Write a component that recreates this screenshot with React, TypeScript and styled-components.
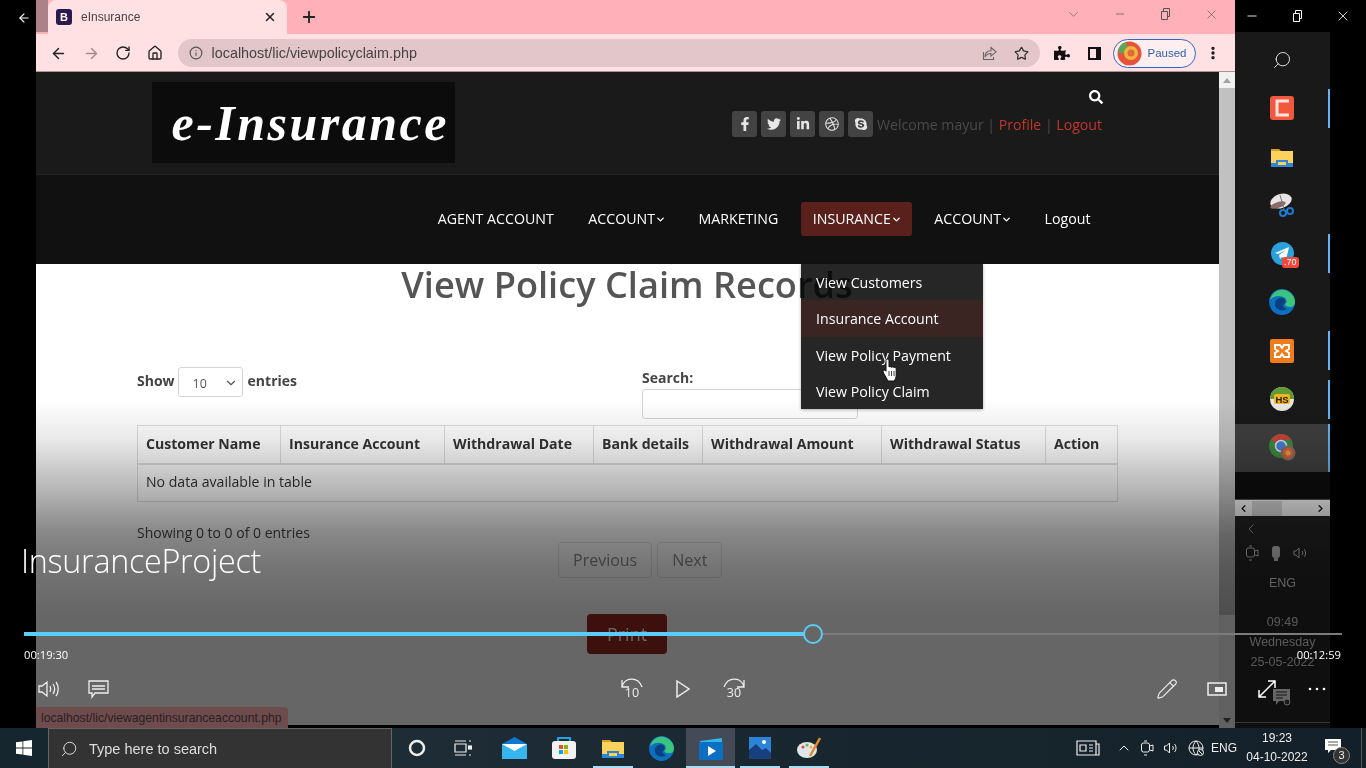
import React from 'react';
import styled, { createGlobalStyle } from 'styled-components';
import {
  FaFacebookF,
  FaTwitter,
  FaLinkedinIn,
  FaDribbble,
  FaSkype,
  FaSearch,
  FaPuzzlePiece,
} from 'react-icons/fa';
import {
  ArrowLeft,
  ArrowRight,
  RotateCw,
  Home,
  Info,
  Star,
  ChevronDown,
  ChevronLeft,
  ChevronRight,
  ChevronUp,
  X,
  Plus,
  Minus,
  EllipsisVertical,
  Search,
  Pencil,
} from 'lucide-react';

const Global = createGlobalStyle`
  html, body { margin: 0; padding: 0; background: #000; overflow: hidden; }
  body { font-family: "Open Sans", "Liberation Sans", sans-serif; }
  * { box-sizing: border-box; }
`;

const Screen = styled.div`
  width: 1366px;
  height: 768px;
  display: flex;
  flex-direction: column;
  overflow: hidden;
  background: #000;
`;

const Stage = styled.div`
  position: relative;
  height: 728px;
  display: flex;
  overflow: hidden;
`;

const Gutter = styled.div`
  width: 36px;
  background: #000;
  color: #fff;
  padding: 8px 0 0 17px;
`;

const Browser = styled.div`
  width: 1199px;
  display: flex;
  flex-direction: column;
`;

const TabStrip = styled.div`
  height: 34px;
  flex: none;
  background: #ffb0b8;
  display: flex;
  align-items: flex-end;
  color: #222;
`;

const PrevTab = styled.div`
  width: 12px;
  height: 32px;
  align-self: flex-start;
  background: #ab8287;
`;

const Tab = styled.div`
  width: 239px;
  height: 34px;
  background: #ffe0e3;
  border-radius: 8px 8px 0 0;
  display: flex;
  align-items: center;
  padding: 0 10px 0 8px;
  font-family: "Liberation Sans", sans-serif;
  font-size: 12px;
  color: #444;
`;

const Favicon = styled.div`
  width: 16px;
  height: 16px;
  border-radius: 3px;
  background: #2b1a4d;
  color: #fff;
  font: bold 11px/16px "Liberation Sans", sans-serif;
  text-align: center;
  margin-right: 9px;
`;

const TabTitle = styled.span`
  flex: 1;
`;

const NewTab = styled.div`
  display: flex;
  margin: 0 auto 8px 13px;
`;

const WindowButtons = styled.div`
  align-self: flex-start;
  height: 28px;
  display: flex;
  align-items: center;
  gap: 33px;
  padding-right: 16px;
  color: #555;
`;

const Toolbar = styled.div`
  height: 38px;
  flex: none;
  background: #ffe0e3;
  border-bottom: 1px solid #b08f92;
  display: flex;
  align-items: center;
  padding: 1px 14px 0;
  color: #222;
`;

const NavIcons = styled.div`
  display: flex;
  align-items: center;
  gap: 15.5px;
  margin-right: 15px;
`;

const Omnibox = styled.div`
  width: 862px;
  height: 28px;
  border-radius: 14px;
  background: #e2c6c9;
  display: flex;
  align-items: center;
  padding: 0 11px;
  font-family: "Liberation Sans", sans-serif;
  font-size: 14.4px;
  color: #444;
  gap: 9px;
`;

const Url = styled.span`
  flex: 1;
`;

const OmniActions = styled.div`
  display: flex;
  align-items: center;
  gap: 17px;
  color: #666;
`;

const ToolActions = styled.div`
  display: flex;
  align-items: center;
  margin-left: 14px;
  color: #111;
`;

const SidePanelIcon = styled.div`
  width: 13px;
  height: 13px;
  border: 2px solid #111;
  border-right-width: 5px;
  margin: 0 12px 0 18px;
`;

const Paused = styled.div`
  width: 83px;
  height: 29px;
  border: 1.5px solid #2f68c4;
  border-radius: 15px;
  background: #ffeef0;
  display: flex;
  align-items: center;
  gap: 6px;
  padding-left: 3px;
  margin-right: 9px;
  font: 11.5px "Liberation Sans", sans-serif;
  color: #2b5fb0;
`;

const Viewport = styled.div`
  position: relative;
  flex: 1;
  display: flex;
  min-height: 0;
`;

const Page = styled.div`
  position: relative;
  flex: 1;
  min-width: 0;
  background: #fff;
  display: flex;
  flex-direction: column;
`;

const ScrollBar = styled.div`
  width: 16px;
  flex: none;
  background: #f1f1f1;
  display: flex;
  flex-direction: column;
  align-items: center;
`;

const ScrollThumb = styled.div`
  width: 100%;
  height: 527px;
  background: #c1c1c1;
`;

const ScrollArrow = styled.div<{ $down?: boolean }>`
  width: 0;
  height: 0;
  margin: 6px 0 5px;
  border-left: 4px solid transparent;
  border-right: 4px solid transparent;
  ${(p) => (p.$down ? 'border-top: 5px solid #505050;' : 'border-bottom: 5px solid #a3a3a3;')}
  ${(p) => (p.$down ? 'margin-top: auto;' : '')}
`;

const TopBar = styled.div`
  height: 103px;
  flex: none;
  background: #1a1a1a;
  border-bottom: 1px solid #222;
  display: flex;
  padding: 10px 117px 0 116px;
`;

const LogoBox = styled.div`
  width: 303px;
  height: 81px;
  background: #0c0c0c;
  color: #fff;
  display: flex;
  align-items: center;
  justify-content: flex-end;
  padding: 0 6px 0 0;
  font: italic bold 50px "Liberation Serif", serif;
  letter-spacing: 2.5px;
  white-space: nowrap;
`;

const TopRight = styled.div`
  flex: 1;
  display: flex;
  flex-direction: column;
  align-items: flex-end;
  padding-top: 8px;
`;

const TopSearch = styled.div`
  display: flex;
  color: #fff;
  font-size: 14px;
  height: 20px;
  margin-right: -1px;
`;

const SocialRow = styled.div`
  display: flex;
  align-items: center;
  gap: 4px;
  margin-top: 1px;
  font-size: 14.1px;
  color: #4a4a4a;
`;

const SocialIcon = styled.span`
  width: 25px;
  height: 26px;
  border-radius: 3px;
  background: #434343;
  color: #e6e6e6;
  display: flex;
  align-items: center;
  justify-content: center;
  font-size: 14px;
`;

const WelcomeText = styled.span`
  white-space: pre;
`;

const RedLink = styled.span`
  color: #c3362b;
`;

const NavBar = styled.div`
  height: 89px;
  flex: none;
  background: #111;
  display: flex;
  align-items: flex-start;
  justify-content: flex-end;
  padding: 27px 116.5px 0 0;
`;

const NavItem = styled.div<{ $active?: boolean }>`
  height: 34px;
  padding: 0 12px;
  margin-left: 10.5px;
  border-radius: 3px;
  background: ${(p) => (p.$active ? '#5a211c' : 'transparent')};
  color: #fff;
  font-size: 14.2px;
  line-height: 34px;
  display: flex;
  align-items: center;
  white-space: nowrap;
`;

const Caret = styled(ChevronDown)`
  margin-right: -2px;
`;

const Dropdown = styled.div`
  position: absolute;
  left: 765px;
  top: 192px;
  width: 182px;
  height: 145px;
  background: #262626;
  display: flex;
  flex-direction: column;
  box-shadow: 0 1px 3px rgba(0, 0, 0, 0.3);
`;

const DropItem = styled.div<{ $hover?: boolean }>`
  position: relative;
  z-index: 4;
  height: 36.4px;
  padding-left: 15px;
  line-height: 37px;
  color: #fff;
  font-size: 14.2px;
  background: ${(p) => (p.$hover ? '#3a2523' : 'transparent')};
`;

const Content = styled.div`
  flex: 1;
  padding: 0 102px 0 101px;
  display: flex;
  flex-direction: column;
  color: #333;
`;

/* the title shows through the open menu as darker letters */
const Heading = styled.h1`
  position: relative;
  z-index: 3;
  margin: -1px 0 0;
  height: 104px;
  text-align: center;
  font-size: 36.2px;
  font-weight: 600;
  line-height: 42px;
  color: #555;
  white-space: nowrap;
  mix-blend-mode: multiply;
`;

const Controls = styled.div`
  height: 58px;
  display: flex;
  justify-content: space-between;
  padding-right: 258px;
  font-size: 14px;
  font-weight: 700;
  color: #444;
`;

const Length = styled.div`
  display: flex;
  align-items: flex-start;
  gap: 4px;
  line-height: 27px;
`;

const SelectBox = styled.div`
  width: 65px;
  height: 30px;
  margin: 0 1px 0 -1px;
  border: 1px solid #d5d5d5;
  border-radius: 3px;
  display: flex;
  align-items: center;
  justify-content: space-between;
  padding: 2px 4px 0 14px;
  font-size: 12.5px;
  font-weight: 400;
  color: #555;
`;

const SearchField = styled.label`
  display: flex;
  flex-direction: column;
  width: 216px;
  margin-right: 1px;
  line-height: 22px;
`;

const SearchBox = styled.div`
  height: 30px;
  border: 1px solid #d5d5d5;
  border-radius: 3px;
  background: #fff;
`;

const Table = styled.table`
  width: 980px;
  flex: none;
  border-collapse: collapse;
  table-layout: fixed;
  font-size: 14.1px;
  color: #333;
`;

const Th = styled.th`
  height: 38px;
  padding: 0 8px 2px;
  text-align: left;
  font-weight: 700;
  white-space: nowrap;
  border: 1px solid #dedede;
  border-bottom-width: 2px;
  color: #333;
`;

const Td = styled.td`
  height: 38px;
  padding: 0 8px 2px;
  border: 1px solid #dedede;
  color: #333;
`;

const Showing = styled.div`
  margin-top: 21px;
  height: 20px;
  font-size: 14px;
  line-height: 20px;
  color: #444;
`;

const Pager = styled.div`
  display: flex;
  gap: 5px;
  margin-top: -1px;
  padding-left: 421px;
`;

const PageButton = styled.div`
  height: 36px;
  padding: 0 14px;
  border: 1px solid #e2e2e2;
  border-radius: 4px;
  font-size: 16px;
  line-height: 34px;
  color: #888;
`;

const PrintRow = styled.div`
  display: flex;
  margin-top: 36px;
  padding-left: 450px;
`;

const PrintButton = styled.div`
  width: 80px;
  height: 40px;
  border-radius: 4px;
  background: #94211a;
  color: #fff;
  opacity: 0.96;
  text-align: center;
  font-size: 18px;
  line-height: 40px;
`;

const PageEdge = styled.div`
  height: 3px;
  flex: none;
  background: #000;
`;

const SidePane = styled.div`
  position: relative;
  width: 131px;
  display: flex;
  flex-direction: column;
  background: #000;
`;

const SideTitle = styled.div`
  height: 32px;
  flex: none;
  display: flex;
  align-items: center;
  justify-content: flex-end;
  gap: 32px;
  padding-right: 15px;
  color: #fff;
`;

const Dock = styled.div`
  width: 95px;
  flex: 1;
  background: #191919;
  display: flex;
  flex-direction: column;
`;

const DockSearch = styled.div`
  height: 52px;
  flex: none;
  display: flex;
  align-items: center;
  justify-content: center;
  padding-top: 4px;
  color: #ddd;
  transform: scaleX(-1);
`;

const DockItem = styled.div<{ $running?: boolean; $active?: boolean }>`
  height: 48.5px;
  flex: none;
  display: flex;
  align-items: center;
  justify-content: center;
  padding-right: 1px;
  background-color: ${(p) => (p.$active ? '#3f3f3f' : 'transparent')};
  background-image: ${(p) => (p.$running ? 'linear-gradient(#62b5f5, #62b5f5)' : 'none')};
  background-repeat: no-repeat;
  background-position: right center;
  background-size: 2px ${(p) => (p.$active ? '100%' : '39px')};
`;

const DockGap = styled.div`
  height: 28px;
  flex: none;
  background: #0e0e0e;
  border-bottom: 1px solid #555;
`;

const DockScroll = styled.div`
  height: 16px;
  flex: none;
  background: #fff;
  display: flex;
  align-items: center;
  padding: 0 4px 0 3px;
  color: #222;
`;

const DockThumb = styled.div`
  width: 30px;
  height: 15px;
  background: #dcdcdc;
  margin: 0 auto 0 3px;
`;

const Tray = styled.div`
  position: relative;
  flex: 1;
  background: #252525;
  display: flex;
  flex-direction: column;
  align-items: center;
  color: #ddd;
  font: 12.5px "Liberation Sans", sans-serif;
  padding-top: 5px;
`;

const TrayBack = styled.div`
  align-self: flex-start;
  padding-left: 8px;
  display: flex;
`;

const TrayIcons = styled.div`
  display: flex;
  gap: 12px;
  align-items: center;
  margin: 8px 12px 0 0;
`;

const TrayLine = styled.div<{ $gap: number }>`
  margin-top: ${(p) => p.$gap}px;
  line-height: 15px;
`;

const TrayFoot = styled.div`
  margin-top: auto;
  margin-bottom: 5px;
  align-self: stretch;
  height: 1px;
  background: #888;
`;

const FeedbackIcon = styled.svg`
  position: absolute;
  left: 38px;
  top: 173px;
`;

/* video player controls, drawn over the recording */
const Shade = styled.div`
  position: absolute;
  left: 0;
  right: 0;
  top: 400px;
  bottom: 0;
  z-index: 5;
  background: linear-gradient(
    to bottom,
    rgba(0, 0, 0, 0) 0,
    rgba(0, 0, 0, 0.09) 40px,
    rgba(0, 0, 0, 0.33) 100px,
    rgba(0, 0, 0, 0.47) 133px,
    rgba(0, 0, 0, 0.55) 170px,
    rgba(0, 0, 0, 0.6) 215px
  );
  pointer-events: none;
`;

const StatusBubble = styled.div`
  position: absolute;
  left: 36px;
  bottom: 0;
  z-index: 6;
  width: 252px;
  height: 21px;
  padding-left: 5px;
  background: #6e4c4e;
  border-radius: 0 4px 0 0;
  font: 12.2px/22px "Liberation Sans", sans-serif;
  color: #2a2020;
`;

const Title = styled.div`
  position: absolute;
  left: 21px;
  top: 538px;
  z-index: 6;
  font-size: 32.3px;
  font-weight: 300;
  line-height: 44px;
  color: #fff;
  letter-spacing: -0.3px;
`;

const SeekTrack = styled.div`
  position: absolute;
  left: 24px;
  right: 24px;
  top: 633px;
  height: 2px;
  z-index: 6;
  background: #7c7c7c;
`;

const SeekFill = styled.div`
  height: 4px;
  margin-top: -1px;
  background: #5accf8;
`;

const SeekThumb = styled.div`
  position: absolute;
  top: -9px;
  width: 20px;
  height: 20px;
  margin-left: -10px;
  border-radius: 50%;
  border: 2px solid #5accf8;
  background: #666;
`;

const TimeText = styled.div<{ $right?: boolean }>`
  position: absolute;
  top: 647px;
  z-index: 6;
  ${(p) => (p.$right ? 'right: 25px;' : 'left: 24px;')}
  font: 11.2px/15px "Open Sans", sans-serif;
  color: #fff;
`;

const PlayerRow = styled.div`
  position: absolute;
  left: 0;
  right: 0;
  top: 675px;
  height: 28px;
  z-index: 6;
  display: flex;
  align-items: center;
  color: #eee;
`;

const PlayerSide = styled.div`
  width: 450px;
  display: flex;
  align-items: center;
  gap: 28px;
  padding-left: 38px;
`;

const PlayerCenter = styled.div`
  display: flex;
  align-items: center;
  gap: 33px;
  margin-left: 171px;
`;

const PlayerEnd = styled.div`
  display: flex;
  align-items: center;
  margin-left: auto;
  padding-right: 40px;
`;

const Skip = styled.div`
  position: relative;
  width: 22px;
  height: 24px;
  display: flex;
  justify-content: center;
`;

const SkipLabel = styled.span`
  position: absolute;
  top: 8px;
  left: 0;
  right: 0;
  text-align: center;
  font: 12.5px/16px "Open Sans", sans-serif;
  color: #eee;
`;

const Taskbar = styled.div`
  height: 40px;
  display: flex;
  align-items: center;
  background: linear-gradient(90deg, #16262f 0%, #1e2c36 30%, #18272f 60%, #142029 100%);
  color: #eee;
`;

const StartButton = styled.div`
  width: 48px;
  display: flex;
  justify-content: center;
`;

const SearchPill = styled.div`
  width: 344px;
  height: 40px;
  background: #333;
  border: 1px solid #666;
  border-bottom: none;
  display: flex;
  align-items: center;
  gap: 11px;
  padding-left: 11px;
  font: 14.5px "Liberation Sans", "Open Sans", sans-serif;
  color: #ddd;
`;

const TaskApps = styled.div`
  display: flex;
  align-items: center;
  height: 40px;
`;

const TaskApp = styled.div<{ $open?: boolean; $active?: boolean }>`
  width: 49px;
  height: 40px;
  display: flex;
  align-items: center;
  justify-content: center;
  background-color: ${(p) => (p.$active ? '#454a57' : 'transparent')};
  background-image: ${(p) => (p.$open ? 'linear-gradient(#a8dcee, #a8dcee)' : 'none')};
  background-repeat: no-repeat;
  background-position: center bottom;
  background-size: ${(p) => (p.$active ? '100%' : '40px')} 2px;
`;

const TaskViewIcon = styled.svg`
  margin-right: 5px;
`;

const SystemTray = styled.div`
  margin-left: auto;
  display: flex;
  align-items: center;
  height: 40px;
  font: 12px "Liberation Sans", sans-serif;
  color: #eee;
`;

const TrayGlyphs = styled.div`
  display: flex;
  align-items: center;
  gap: 9px;
  margin-right: 7px;
`;

const Clock = styled.div`
  width: 72px;
  margin-left: 4px;
  text-align: center;
  line-height: 19px;
  font-size: 12px;
`;

const Notify = styled.div`
  position: relative;
  width: 40px;
  height: 40px;
  display: flex;
  align-items: center;
  justify-content: center;
  padding-bottom: 4px;
  margin-right: 8px;
`;

const NotifyBadge = styled.span`
  position: absolute;
  right: 3px;
  bottom: 4px;
  width: 17px;
  height: 17px;
  border-radius: 50%;
  background: #333;
  border: 1px solid #888;
  font: 11px/15px "Liberation Sans", sans-serif;
  text-align: center;
  color: #eee;
`;

const ShowDesktop = styled.div`
  width: 5px;
  height: 40px;
  border-left: 1px solid #555;
`;

const Cursor = styled.svg`
  position: absolute;
  left: 846px;
  top: 286px;
  z-index: 4;
`;

const TelegramWrap = styled.div`
  position: relative;
  display: flex;
`;

const TelegramBadge = styled.span`
  position: absolute;
  right: -5px;
  bottom: -3px;
  padding: 0 2px;
  border-radius: 3px;
  background: #f04a3c;
  font: 9px/11px "Liberation Sans", sans-serif;
  color: #fff;
`;

const Folder = () => (
  <svg width="22" height="20" viewBox="0 0 22 20">
    <path d="M0 2h8l2 2H0z" fill="#d8a022" />
    <path d="M0 4h22v16H0z" fill="#fbd25c" />
    <path d="M0 16h5v-3h12v3h5v4H0z" fill="#2f86d6" />
    <path d="M7 15h8v3H7z" fill="#fbd25c" />
  </svg>
);

const Edge = ({ size = 26 }: { size?: number }) => (
  <svg width={size} height={size} viewBox="0 0 26 26">
    <circle cx="13" cy="13" r="13" fill="#0c6fc0" />
    <path d="M1 11C3 3 10 0 15 1c6 1 11 6 11 12 0 3-2 5-5 5-3 0-5-1-5-3 2-1 2-4 0-6-4-3-11-3-15 2z" fill="#3bc47e" />
    <path d="M6 15c0-4 4-7 8-6 3 1 3 5 1 6-2 1-1 4 3 5-4 3-12 1-12-5z" fill="#0a3f80" />
  </svg>
);

const ChromeBadged = () => (
  <svg width="27" height="27" viewBox="0 0 27 27">
    <circle cx="12" cy="12" r="12" fill="#3b8a3f" />
    <path d="M12 0a12 12 0 0 1 10.400 6H12a6 6 0 0 0-5.400 3.500L2.600 5.500A12 12 0 0 1 12 0z" fill="#c9443a" />
    <circle cx="12" cy="12" r="5.500" fill="#3f7fe0" stroke="#ddd" strokeWidth="1.500" />
    <circle cx="19" cy="19" r="7.500" fill="#8a6a5a" />
    <circle cx="19" cy="19" r="5" fill="#d9603c" />
    <circle cx="19" cy="19" r="2.500" fill="#e0a03c" />
  </svg>
);

const PausedAvatar = () => (
  <svg width="25" height="25" viewBox="0 0 25 25">
    <circle cx="12.500" cy="12.500" r="12" fill="#e5533d" />
    <path d="M1 12a12 12 0 0 1 8-11l3 11z" fill="#5aa75a" />
    <circle cx="14" cy="12" r="7" fill="#f2b53c" />
    <circle cx="14" cy="12" r="3.500" fill="#e2663e" />
  </svg>
);

const columns = [
  { label: 'Customer Name', width: 143 },
  { label: 'Insurance Account', width: 164 },
  { label: 'Withdrawal Date', width: 149 },
  { label: 'Bank details', width: 109 },
  { label: 'Withdrawal Amount', width: 179 },
  { label: 'Withdrawal Status', width: 164 },
  { label: 'Action', width: 72 },
];

const socials = [FaFacebookF, FaTwitter, FaLinkedinIn, FaDribbble, FaSkype];

const navItems = [
  { label: 'AGENT ACCOUNT' },
  { label: 'ACCOUNT', caret: true },
  { label: 'MARKETING' },
  { label: 'INSURANCE', caret: true, active: true },
  { label: 'ACCOUNT', caret: true },
  { label: 'Logout' },
];

const menuItems = ['View Customers', 'Insurance Account', 'View Policy Payment', 'View Policy Claim'];

const App = () => {
  return (
    <Screen>
      <Global />
      <Stage>
        <Gutter>
          <ArrowLeft size={14} />
        </Gutter>
        <Browser>
          <TabStrip>
            <PrevTab />
            <Tab>
              <Favicon>B</Favicon>
              <TabTitle>eInsurance</TabTitle>
              <X size={14} strokeWidth={2.5} color="#222" />
            </Tab>
            <NewTab>
              <Plus size={18} strokeWidth={2.5} />
            </NewTab>
            <WindowButtons>
              <ChevronDown size={15} strokeWidth={1} />
              <Minus size={12} strokeWidth={1.5} />
              <svg width="12" height="12" viewBox="0 0 12 12" fill="none" stroke="#555">
                <path d="M2.500 3.500h6v8h-6zM4.500 3.500v-3h6v8h-2" />
              </svg>
              <X size={15} strokeWidth={1} />
            </WindowButtons>
          </TabStrip>
          <Toolbar>
            <NavIcons>
              <ArrowLeft size={17} />
              <ArrowRight size={17} color="#a88" />
              <RotateCw size={16} />
              <Home size={16} />
            </NavIcons>
            <Omnibox>
              <Info size={14} color="#555" />
              <Url>localhost/lic/viewpolicyclaim.php</Url>
              <OmniActions>
                <svg width="15" height="15" viewBox="0 0 15 15" fill="none" stroke="#666" strokeWidth="1.100">
                  <path d="M1.500 6v7.500h10V11M9 1.500l5 4.300-5 4.300V7.500C6 7.500 4 9 3 11c0-4 2.200-6.300 6-6.300z" />
                </svg>
                <Star size={15} color="#333" />
              </OmniActions>
            </Omnibox>
            <ToolActions>
              <FaPuzzlePiece size={16} />
              <SidePanelIcon />
              <Paused>
                <PausedAvatar />
                Paused
              </Paused>
              <EllipsisVertical size={16} strokeWidth={3} />
            </ToolActions>
          </Toolbar>
          <Viewport>
            <Page>
              <TopBar>
                <LogoBox>e-Insurance</LogoBox>
                <TopRight>
                  <TopSearch>
                    <FaSearch />
                  </TopSearch>
                  <SocialRow>
                    {socials.map((Icon, i) => (
                      <SocialIcon key={i}>
                        <Icon />
                      </SocialIcon>
                    ))}
                    <WelcomeText>
                      Welcome mayur | <RedLink>Profile</RedLink> | <RedLink>Logout</RedLink>
                    </WelcomeText>
                  </SocialRow>
                </TopRight>
              </TopBar>
              <NavBar>
                {navItems.map((item, i) => (
                  <NavItem key={i} $active={item.active}>
                    {item.label}
                    {item.caret && <Caret size={11} strokeWidth={3} />}
                  </NavItem>
                ))}
              </NavBar>
              <Dropdown>
                {menuItems.map((item, i) => (
                  <DropItem key={item} $hover={i === 1}>
                    {item}
                  </DropItem>
                ))}
              </Dropdown>
              <Cursor width="16" height="24" viewBox="0 0 16 24">
                <path
                  d="M5 1c1 0 2 .8 2 2v6c.5-.5 2-.5 2.500.2.600-.5 2-.4 2.500.4.700-.4 2-.2 2.200 1V17c0 3-1 4-2 6H6L1.500 15c-.8-1.500-.3-2.500.6-2.800.8-.2 1.400.3 1.900 1V3c0-1.200.4-2 1-2z"
                  fill="#fff"
                  stroke="#111"
                  strokeWidth="1"
                />
                <path d="M7 13v5M9.500 13v5M12 13v5" stroke="#111" strokeWidth="0.800" />
              </Cursor>
              <Content>
                <Heading>View Policy Claim Records</Heading>
                <Controls>
                  <Length>
                    Show
                    <SelectBox>
                      10
                      <ChevronDown size={14} />
                    </SelectBox>
                    entries
                  </Length>
                  <SearchField>
                    Search:
                    <SearchBox />
                  </SearchField>
                </Controls>
                <Table>
                  <colgroup>
                    {columns.map((c) => (
                      <col key={c.label} width={c.width} />
                    ))}
                  </colgroup>
                  <thead>
                    <tr>
                      {columns.map((c) => (
                        <Th key={c.label}>{c.label}</Th>
                      ))}
                    </tr>
                  </thead>
                  <tbody>
                    <tr>
                      <Td colSpan={7}>No data available in table</Td>
                    </tr>
                  </tbody>
                </Table>
                <Showing>Showing 0 to 0 of 0 entries</Showing>
                <Pager>
                  <PageButton>Previous</PageButton>
                  <PageButton>Next</PageButton>
                </Pager>
                <PrintRow>
                  <PrintButton>Print</PrintButton>
                </PrintRow>
              </Content>
              <PageEdge />
            </Page>
            <ScrollBar>
              <ScrollArrow />
              <ScrollThumb />
              <ScrollArrow $down />
            </ScrollBar>
          </Viewport>
        </Browser>
        <SidePane>
          <SideTitle>
            <Minus size={14} strokeWidth={1.5} />
            <svg width="12" height="12" viewBox="0 0 12 12" fill="none" stroke="#fff">
              <path d="M2.500 3.500h6v8h-6zM4.500 3.500v-3h6v8h-2" />
            </svg>
            <X size={16} strokeWidth={1.2} />
          </SideTitle>
          <Dock>
            <DockSearch>
              <Search size={20} strokeWidth={1.2} />
            </DockSearch>
            <DockItem $running>
              <svg width="24" height="24" viewBox="0 0 24 24">
                <rect width="24" height="24" rx="3" fill="#f2583e" />
                <path d="M19 5H7v14h12" fill="none" stroke="#ffe3dc" strokeWidth="3" />
              </svg>
            </DockItem>
            <DockItem>
              <Folder />
            </DockItem>
            <DockItem>
              <svg width="24" height="24" viewBox="0 0 24 24">
                <ellipse cx="11" cy="8" rx="11" ry="7" fill="#e9e5e5" transform="rotate(-18 11 8)" />
                <ellipse cx="8" cy="12" rx="8" ry="3" fill="#8d6a6a" transform="rotate(-18 8 12)" />
                <path d="M10 2l4 14" stroke="#777" />
                <circle cx="13" cy="20" r="3" fill="none" stroke="#1f7ad0" strokeWidth="2" />
                <circle cx="20" cy="18" r="3" fill="none" stroke="#1f7ad0" strokeWidth="2" />
              </svg>
            </DockItem>
            <DockItem $running>
              <TelegramWrap>
                <svg width="23" height="23" viewBox="0 0 23 23">
                  <circle cx="11.500" cy="11.500" r="11.500" fill="#2ba0dc" />
                  <path d="M4 11l14-6-3 13-4-3-2 2-1-4 7-5-8 4z" fill="#fff" />
                </svg>
                <TelegramBadge>.70</TelegramBadge>
              </TelegramWrap>
            </DockItem>
            <DockItem>
              <Edge />
            </DockItem>
            <DockItem $running>
              <svg width="24" height="24" viewBox="0 0 24 24">
                <rect width="24" height="24" rx="2" fill="#f07c1c" />
                <path d="M5 6h5l2 3 2-3h5v4l-3 2 3 2v4h-5l-2-3-2 3H5v-4l3-2-3-2z" fill="none" stroke="#fff" strokeWidth="2" />
              </svg>
            </DockItem>
            <DockItem $running>
              <svg width="24" height="24" viewBox="0 0 24 24">
                <circle cx="12" cy="12" r="12" fill="#e8e8e0" />
                <path d="M0 12a12 12 0 0 1 24 0z" fill="#5f9a35" />
                <rect x="4" y="7" width="16" height="10" rx="2" fill="#f4b21f" />
                <text x="12" y="15.500" textAnchor="middle" fontFamily="Liberation Sans, sans-serif" fontWeight="700" fontSize="9.500" fill="#222">
                  HS
                </text>
              </svg>
            </DockItem>
            <DockItem $running $active>
              <ChromeBadged />
            </DockItem>
            <DockGap />
            <DockScroll>
              <ChevronLeft size={11} strokeWidth={3} />
              <DockThumb />
              <ChevronRight size={11} strokeWidth={3} />
            </DockScroll>
            <Tray>
              <TrayBack>
                <ChevronLeft size={16} strokeWidth={1} />
              </TrayBack>
              <TrayIcons>
                <svg width="13" height="16" viewBox="0 0 13 16" fill="none" stroke="#ccc">
                  <rect x="0.500" y="3" width="8" height="9" rx="2" />
                  <path d="M9 6l3-1v6l-3-1M3 1h3M3 15h3" />
                </svg>
                <svg width="10" height="15" viewBox="0 0 10 15" fill="#ccc">
                  <rect x="1" width="8" height="12" rx="3" />
                  <rect x="3" y="12" width="4" height="3" />
                </svg>
                <svg width="15" height="14" viewBox="0 0 15 14" fill="none" stroke="#ccc">
                  <path d="M1 5h2l3-3v10L3 9H1zM9 5c1 1 1 3 0 4M11 3c2 2 2 6 0 8" />
                </svg>
              </TrayIcons>
              <TrayLine $gap={15}>ENG</TrayLine>
              <TrayLine $gap={24}>09:49</TrayLine>
              <TrayLine $gap={5}>Wednesday</TrayLine>
              <TrayLine $gap={5}>25-05-2022</TrayLine>
              <FeedbackIcon width="18" height="17" viewBox="0 0 18 17">
                <path d="M0 0h17v12H6l-3 4v-4H0z" fill="#fff" />
                <path d="M3 3h11M3 6h11M3 9h7" stroke="#333" />
                <circle cx="14" cy="13" r="3" fill="#444" stroke="#fff" />
              </FeedbackIcon>
              <TrayFoot />
            </Tray>
          </Dock>
        </SidePane>
        <Shade />
        <StatusBubble>localhost/lic/viewagentinsuranceaccount.php</StatusBubble>
        <Title>InsuranceProject</Title>
        <SeekTrack>
          <SeekFill style={{ width: 789 }} />
          <SeekThumb style={{ left: 789 }} />
        </SeekTrack>
        <TimeText>00:19:30</TimeText>
        <TimeText $right>00:12:59</TimeText>
        <PlayerRow>
          <PlayerSide>
            <svg width="22" height="18" viewBox="0 0 22 18" fill="none" stroke="#eee" strokeWidth="1.300">
              <path d="M1 6h3l5-4v14l-5-4H1zM12 6c1 2 1 4 0 6M15 4c2 3 2 7 0 10M18 2c3 4 3 10 0 14" />
            </svg>
            <svg width="21" height="19" viewBox="0 0 21 19" fill="none" stroke="#eee" strokeWidth="1.300">
              <path d="M1 1h19v12H7l-3 4v-4H1zM4 6h13M4 9h13" />
            </svg>
          </PlayerSide>
          <PlayerCenter>
            <Skip>
              <svg width="22" height="12" viewBox="0 0 22 12" fill="none" stroke="#eee" strokeWidth="1.300">
                <path d="M1 10c2-10 16-11 20 0M1 3v7h7" />
              </svg>
              <SkipLabel>10</SkipLabel>
            </Skip>
            <svg width="14" height="18" viewBox="0 0 14 18" fill="none" stroke="#eee" strokeWidth="1.500">
              <path d="M1 1l12 8-12 8z" />
            </svg>
            <Skip>
              <svg width="22" height="12" viewBox="0 0 22 12" fill="none" stroke="#eee" strokeWidth="1.300">
                <path d="M1 10c4-11 18-10 20 0M21 3v7h-7" />
              </svg>
              <SkipLabel>30</SkipLabel>
            </Skip>
          </PlayerCenter>
          <PlayerEnd>
            <Pencil size={22} strokeWidth={1.2} />
            <svg width="20" height="14" viewBox="0 0 20 14" fill="none" stroke="#eee" strokeWidth="1.500" style={{ marginLeft: 29 }}>
              <rect x="1" y="1" width="18" height="12" />
              <rect x="8" y="5" width="8" height="5" fill="#eee" stroke="none" />
            </svg>
            <svg width="20" height="20" viewBox="0 0 20 20" fill="none" stroke="#fff" strokeWidth="1.500" style={{ marginLeft: 30 }}>
              <path d="M2 18L18 2M11 2h7v7M2 11v7h7" />
            </svg>
            <svg width="18" height="4" viewBox="0 0 18 4" fill="#fff" style={{ marginLeft: 31 }}>
              <circle cx="2" cy="2" r="1.300" />
              <circle cx="9" cy="2" r="1.300" />
              <circle cx="16" cy="2" r="1.300" />
            </svg>
          </PlayerEnd>
        </PlayerRow>
      </Stage>
      <Taskbar>
        <StartButton>
          <svg width="16" height="16" viewBox="0 0 16 16" fill="#fff">
            <path d="M0 2.300l6.500-.9v6.200H0zM7.300 1.300L16 0v7.600H7.300zM0 8.400h6.500v6.200L0 13.700zM7.300 8.400H16V16l-8.700-1.300z" />
          </svg>
        </StartButton>
        <SearchPill>
          <Search size={18} strokeWidth={1.3} style={{ transform: 'scaleX(-1)' }} />
          Type here to search
        </SearchPill>
        <TaskApps>
          <TaskApp>
            <svg width="18" height="18" viewBox="0 0 18 18" fill="none" stroke="#eee" strokeWidth="2.500">
              <circle cx="9" cy="9" r="7" />
            </svg>
          </TaskApp>
          <TaskApp>
            <TaskViewIcon width="18" height="16" viewBox="0 0 18 16" fill="none" stroke="#eee" strokeWidth="1.200">
              <path d="M1 1h11M1 15h11M1 4h11v8H1zM15 1h2M15 15h2" />
              <rect x="14.500" y="6" width="3" height="3" fill="#eee" />
            </TaskViewIcon>
          </TaskApp>
          <TaskApp>
            <svg width="25" height="22" viewBox="0 0 25 22">
              <path d="M0 7l12.500-7L25 7v15H0z" fill="#0e78cf" />
              <path d="M0 7h25v15H0z" fill="#36b5ee" />
              <path d="M0 7h25l-12.500 7z" fill="#fff" />
            </svg>
          </TaskApp>
          <TaskApp>
            <svg width="24" height="24" viewBox="0 0 24 24">
              <path d="M6 5V2h12v3" fill="none" stroke="#1ba5e0" strokeWidth="2" />
              <rect y="5" width="24" height="18" rx="3" fill="#f2f2f2" />
              <path d="M7 9h4v4H7z" fill="#f25022" />
              <path d="M12 9h4v4h-4z" fill="#7fba00" />
              <path d="M7 14h4v4H7z" fill="#00a4ef" />
              <path d="M12 14h4v4h-4z" fill="#ffb900" />
            </svg>
          </TaskApp>
          <TaskApp $open>
            <Folder />
          </TaskApp>
          <TaskApp>
            <Edge size={25} />
          </TaskApp>
          <TaskApp $open $active>
            <svg width="24" height="24" viewBox="0 0 24 24">
              <path d="M1 5l22-3v4H1z" fill="#33b6e8" />
              <rect x="0" y="6" width="24" height="18" rx="1" fill="#0b6fc4" />
              <path d="M9 10l8 5-8 5z" fill="#fff" />
            </svg>
          </TaskApp>
          <TaskApp $open>
            <svg width="22" height="22" viewBox="0 0 22 22">
              <rect width="22" height="22" fill="#2d83d8" />
              <path d="M0 22V13l7-6 6 6 4-2 5 5v6z" fill="#18407f" />
              <circle cx="15" cy="5" r="2" fill="#fff" />
            </svg>
          </TaskApp>
          <TaskApp $open>
            <svg width="24" height="24" viewBox="0 0 24 24">
              <ellipse cx="10" cy="14" rx="10" ry="8" fill="#dfe5ea" />
              <circle cx="6" cy="11" r="1.500" fill="#e9493a" />
              <circle cx="10" cy="9" r="1.500" fill="#6cbb3c" />
              <circle cx="14" cy="11" r="1.500" fill="#f2b53c" />
              <path d="M23 2L13 20" stroke="#e08a2c" strokeWidth="2.500" />
            </svg>
          </TaskApp>
        </TaskApps>
        <SystemTray>
          <TrayGlyphs>
            <svg width="24" height="16" viewBox="0 0 24 16" fill="none" stroke="#eee" strokeWidth="1.200">
              <path d="M1 1h19v14H1zM20 4h3v11h-3M4 5h6v6H4zM13 5h4M13 8h4M13 11h4" />
            </svg>
            <ChevronUp size={16} strokeWidth={1.5} style={{ marginLeft: 7 }} />
            <svg width="13" height="16" viewBox="0 0 13 16" fill="none" stroke="#eee">
              <rect x="0.500" y="3" width="8" height="9" rx="2" />
              <path d="M9 6l3-1v6l-3-1M3 1h3M3 15h3" />
            </svg>
            <svg width="16" height="14" viewBox="0 0 15 14" fill="none" stroke="#eee">
              <path d="M1 5h2l3-3v10L3 9H1zM9 5c1 1 1 3 0 4M11 3c2 2 2 6 0 8" />
            </svg>
            <svg width="16" height="16" viewBox="0 0 16 16" fill="none" stroke="#eee">
              <circle cx="8" cy="8" r="7" />
              <path d="M1 8h14M8 1c-4 4-4 10 0 14M8 1c4 4 4 10 0 14" />
              <circle cx="12.500" cy="12.500" r="3" fill="#18272f" />
              <path d="M10.500 10.500l4 4" />
            </svg>
          </TrayGlyphs>
          ENG
          <Clock>
            19:23
            <br />
            04-10-2022
          </Clock>
          <Notify>
            <svg width="16" height="14" viewBox="0 0 16 14" fill="#fff">
              <path d="M0 0h16v11H6l-3 3v-3H0z" />
              <path d="M3 3h10M3 6h10" stroke="#555" />
            </svg>
            <NotifyBadge>3</NotifyBadge>
          </Notify>
          <ShowDesktop />
        </SystemTray>
      </Taskbar>
    </Screen>
  );
};

export default App;
